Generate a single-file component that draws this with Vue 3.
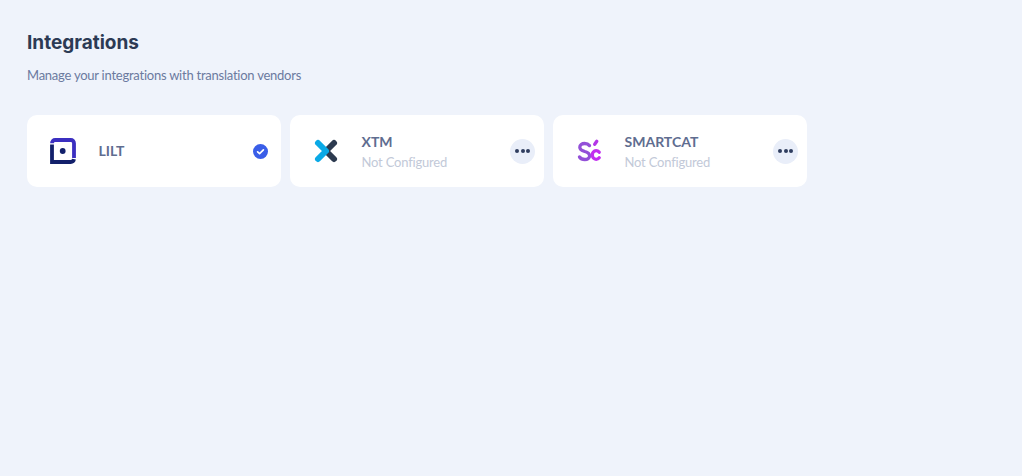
<script setup>
const vendors = [
  { name: 'LILT', logo: 'lilt', active: true },
  { name: 'XTM', logo: 'xtm', status: 'Not Configured' },
  { name: 'SMARTCAT', logo: 'sc', status: 'Not Configured' },
]
</script>

<template>
  <main class="page">
    <h1 class="title">Integrations</h1>
    <p class="sub">Manage your integrations with translation vendors</p>
    <section class="grid">
      <article v-for="v in vendors" :key="v.name" class="card">
        <div class="logo">
          <svg v-if="v.logo === 'lilt'" width="26" height="26" viewBox="0 0 26 26" fill="none" stroke-width="3.8">
            <path d="M2 5.2A3.2 3.2 0 0 1 5.2 2H20.800A3.2 3.2 0 0 1 24 5.200V20" stroke="#3b2fc0"/>
            <path d="M2 6.500V24H20.500A3.500 3.500 0 0 0 24 21.200" stroke="#12206b"/>
            <circle cx="12.700" cy="13" r="2.900" fill="#12206b"/>
          </svg>
          <svg v-else-if="v.logo === 'xtm'" width="26" height="26" viewBox="0 0 26 26" fill="none" stroke-linecap="round" stroke-width="6">
            <path d="M13 13 21 5" stroke="#2c3a4f"/>
            <path d="M13 13 21 21" stroke="#2c3a4f"/>
            <path d="M5 5 13 13 5 21" stroke="#0aa9e6" stroke-linejoin="round"/>
          </svg>
          <svg v-else width="26" height="26" viewBox="0 0 26 26" fill="none" stroke-linecap="round" stroke-width="3.300">
            <path d="M13.500 7.600C12.200 6 10.500 5.500 8.600 5.500 5.800 5.500 3.800 7 3.800 9.300 3.800 12 6.500 12.800 8.800 13.500 11.300 14.200 13.600 15.200 13.600 17.800 13.600 20.200 11.400 21.500 8.800 21.500 6.500 21.500 4.600 20.700 3.500 19" stroke="#9350d8"/>
            <path d="M23.200 14.200C22.300 13.200 21.200 12.700 20.100 12.700 17.800 12.700 16.300 14.700 16.300 17 16.300 19.400 17.800 21.300 20.100 21.300 21.300 21.300 22.400 20.800 23.200 19.800" stroke="#c22ef0"/>
            <path d="M18.700 6.300 20.800 3.300" stroke="#b336e8"/>
          </svg>
        </div>
        <div class="info">
          <div class="name">{{ v.name }}</div>
          <div v-if="v.status" class="status">{{ v.status }}</div>
        </div>
        <span v-if="v.active" class="check">
          <svg width="15" height="15" viewBox="0 0 15 15" fill="none">
            <circle cx="7.500" cy="7.500" r="7.500" fill="#3a5ee8"/>
            <path d="M4.600 7.800 6.600 9.600 10.400 5.900" stroke="#fff" stroke-width="1.700" stroke-linecap="round" stroke-linejoin="round"/>
          </svg>
        </span>
        <button v-else class="more" type="button" aria-label="More">
          <i></i><i></i><i></i>
        </button>
      </article>
    </section>
  </main>
</template>

<style>
html, body { margin: 0; background: #eff3fb; }
</style>

<style scoped>
.page {
  box-sizing: border-box;
  min-height: 476px;
  padding: 31px 27px 0;
  background: #eff3fb;
  font-family: "Lato", "Open Sans", sans-serif;
}
.title {
  margin: 0;
  font-family: "Inter", sans-serif;
  font-size: 19px;
  line-height: 24px;
  font-weight: 700;
  color: #2c3a54;
}
.sub {
  margin: 11px 0 0;
  font-size: 13px;
  letter-spacing: -0.24px;
  line-height: 18px;
  color: #6b7a9f;
}
.grid {
  display: grid;
  grid-template-columns: repeat(3, 254px);
  gap: 9px;
  margin-top: 31px;
}
.card {
  box-sizing: border-box;
  height: 72px;
  display: flex;
  align-items: center;
  padding: 0 9px 0 23px;
  background: #fff;
  border-radius: 10px;
}
.logo { width: 26px; height: 26px; flex: none; }
.logo svg { display: block; }
.info { flex: 1; margin-left: 22.5px; }
.name {
  font-size: 14px;
  line-height: 20px;
  font-weight: 700;
  color: #5f6d90;
}
.status {
  margin-top: 2px;
  font-size: 13px;
  letter-spacing: -0.2px;
  line-height: 16px;
  color: #c2c9d8;
}
.check { width: 15px; height: 15px; margin-right: 4px; }
.check svg { display: block; }
.more {
  width: 25px;
  height: 25px;
  padding: 0;
  border: 0;
  border-radius: 50%;
  background: #e9eef9;
  display: flex;
  align-items: center;
  justify-content: center;
  gap: 1.5px;
}
.more i {
  width: 4px;
  height: 4px;
  border-radius: 50%;
  background: #2f3d5f;
}
</style>
